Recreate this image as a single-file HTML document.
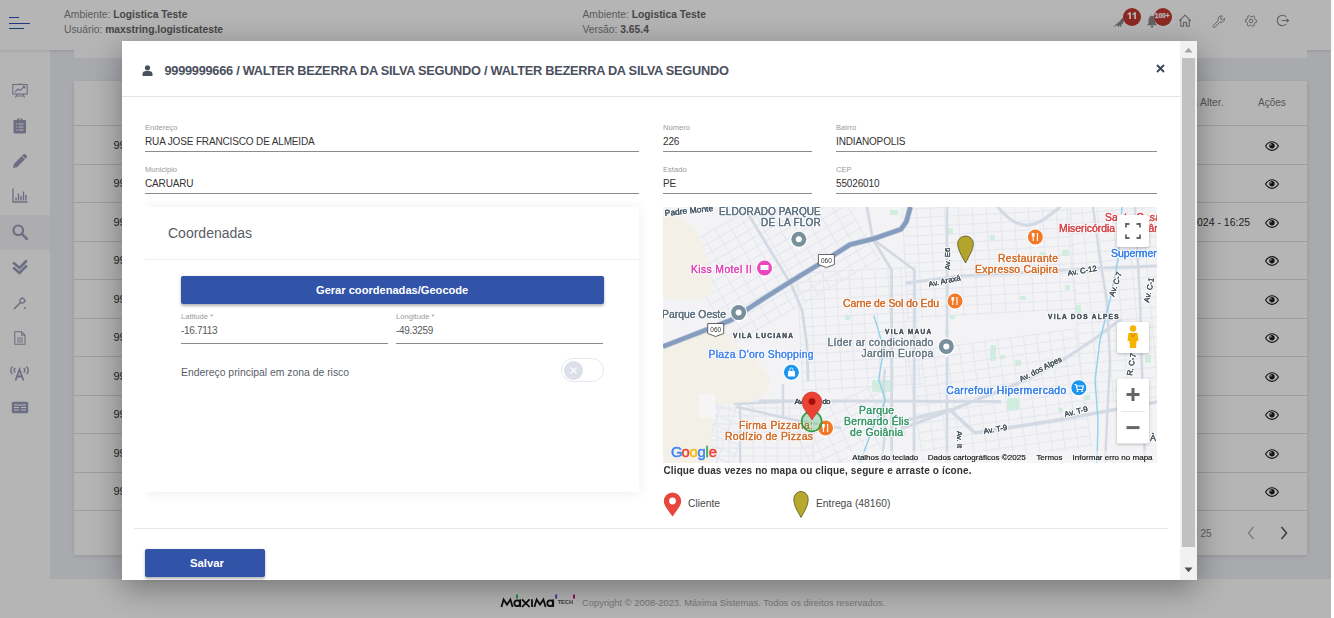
<!DOCTYPE html>
<html><head><meta charset="utf-8"><style>
*{box-sizing:border-box}
html,body{margin:0;padding:0}
body{width:1334px;height:618px;overflow:hidden;position:relative;background:#fff;font-family:"Liberation Sans",sans-serif}
.t{position:absolute;white-space:nowrap}
.r{position:absolute}
svg{position:absolute;overflow:visible}
</style></head>
<body>
<div class="r" style="left:0px;top:0px;width:1334px;height:618px;background:#ffffff;"></div><div class="r" style="left:50px;top:50px;width:1281px;height:529px;background:#eef0f5;"></div><div class="r" style="left:0px;top:50px;width:50px;height:528px;background:#ffffff;"></div><div class="r" style="left:0px;top:215px;width:50px;height:35px;background:#f4f4f7;"></div><div class="r" style="left:0px;top:0px;width:1331px;height:50px;background:#ffffff;box-shadow:0 1px 3px rgba(0,0,0,.12)"></div><div class="r" style="left:9px;top:16.7px;width:10px;height:1.1px;background:#2c4fb0;"></div><div class="r" style="left:9px;top:22.8px;width:21px;height:1.1px;background:#2c4fb0;"></div><div class="r" style="left:9px;top:27.9px;width:15px;height:1.1px;background:#2c4fb0;"></div><div class="t" style="left:64px;top:10.44px;font-size:10.3px;line-height:10.3px;color:#838383;font-weight:400;">Ambiente: <b style="color:#666666">Logistica Teste</b></div><div class="t" style="left:64px;top:25.24px;font-size:10.3px;line-height:10.3px;color:#838383;font-weight:400;">Usuário: <b style="color:#666666">maxstring.logisticateste</b></div><div class="t" style="left:582.5px;top:10.44px;font-size:10.3px;line-height:10.3px;color:#838383;font-weight:400;">Ambiente: <b style="color:#666666">Logistica Teste</b></div><div class="t" style="left:582.5px;top:25.24px;font-size:10.3px;line-height:10.3px;color:#838383;font-weight:400;">Versão: <b style="color:#666666">3.65.4</b></div><svg style="left:1111px;top:13px;" width="16" height="16" viewBox="0 0 16 16"><path d="M2 14 L9 8 C10 6 11 5 12.5 4.5 L14 4 L13 6 C13.5 9 12 11 10 12 L10.5 14 L9.5 14 L9 12.5 L8 12.5 L8 14 L7 14 L7 12.5 C5.5 12.5 4 13.2 2 14 Z" fill="#8a8a8a"/></svg><svg style="left:1145px;top:14px;" width="14" height="14" viewBox="0 0 14 14"><path d="M7 1.5 C4.5 2 3.5 4 3.5 6.5 L3.5 9.5 L1.8 11.3 L12.2 11.3 L10.5 9.5 L10.5 6.5 C10.5 4 9.5 2 7 1.5 Z" fill="#8a8a8a"/><circle cx="7" cy="12.6" r="1.2" fill="#8a8a8a"/></svg><div class="r" style="left:1123px;top:8px;width:18px;height:18px;border-radius:50%;background:#c4392f"></div><svg style="left:1127px;top:12px;" width="10" height="8" viewBox="0 0 10 8"><path d="M0.6 1.6 L2.6 0.3 L3.9 0.3 L3.9 7 L2.2 7 L2.2 2.2 L0.6 3 Z M5.6 1.6 L7.6 0.3 L8.9 0.3 L8.9 7 L7.2 7 L7.2 2.2 L5.6 3 Z" fill="#fff"/></svg><div class="r" style="left:1153.5px;top:8px;width:18px;height:18px;border-radius:50%;background:#c4392f"></div><svg style="left:1154px;top:12px;" width="17" height="8" viewBox="0 0 17 8"><text x="8.2" y="6.2" font-family="Liberation Sans" font-weight="700" font-size="6.6" fill="#fff" stroke="#fff" stroke-width="0.25" text-anchor="middle" textLength="14.8" lengthAdjust="spacingAndGlyphs">100+</text></svg><svg style="left:1178px;top:14px;" width="14" height="13" viewBox="0 0 14 13"><path d="M1.2 6.8 L7 1.2 L12.8 6.8 M2.8 5.4 L2.8 12.2 L5.6 12.2 L5.6 8.3 L8.4 8.3 L8.4 12.2 L11.2 12.2 L11.2 5.4" fill="none" stroke="#8a8a8a" stroke-width="1.1" stroke-linejoin="round"/></svg><svg style="left:1211px;top:14px;" width="14" height="14" viewBox="0 0 14 14"><path d="M2.2 11.8 L7.2 6.6 C6.6 4.9 7.2 3 8.9 2.2 C9.8 1.8 10.6 1.8 11.3 2.1 L9.6 3.8 L10 5.5 L11.7 5.9 L13.4 4.2 C13.7 5 13.6 5.9 13.1 6.7 C12.2 8.1 10.4 8.6 8.9 8.1 L3.8 13.3 C3.2 13.8 2.4 13.6 2 13 C1.8 12.6 1.9 12.1 2.2 11.8 Z" fill="none" stroke="#8a8a8a" stroke-width="1"/></svg><svg style="left:1243.5px;top:13.5px;" width="14" height="14" viewBox="0 0 14 14"><polygon points="12.60,7.00 12.55,7.73 12.41,8.45 10.97,8.65 10.72,9.15 10.41,9.62 10.04,10.04 10.41,11.44 9.80,11.85 9.14,12.17 8.45,12.41 7.56,11.26 7.00,11.30 6.44,11.26 5.89,11.15 4.86,12.17 4.20,11.85 3.59,11.44 3.04,10.96 3.59,9.62 3.28,9.15 3.03,8.65 2.85,8.11 1.45,7.73 1.40,7.00 1.45,6.27 1.59,5.55 3.03,5.35 3.28,4.85 3.59,4.38 3.96,3.96 3.59,2.56 4.20,2.15 4.86,1.83 5.55,1.59 6.44,2.74 7.00,2.70 7.56,2.74 8.11,2.85 9.14,1.83 9.80,2.15 10.41,2.56 10.96,3.04 10.41,4.38 10.72,4.85 10.97,5.35 11.15,5.89 12.55,6.27" fill="none" stroke="#8a8a8a" stroke-width="1" stroke-linejoin="round"/><circle cx="7" cy="7" r="1.8" fill="none" stroke="#8a8a8a" stroke-width="1"/></svg><svg style="left:1276px;top:14px;" width="14" height="13" viewBox="0 0 14 13"><path d="M10.3 3 A5.2 5.2 0 1 0 10.3 10" fill="none" stroke="#8a8a8a" stroke-width="1.1"/><path d="M5.5 6.5 L12.6 6.5 M10.6 4.6 L12.6 6.5 L10.6 8.4" fill="none" stroke="#8a8a8a" stroke-width="1.1"/></svg><svg style="left:12px;top:83px;" width="16" height="16" viewBox="0 0 16 16"><rect x="0.8" y="1.5" width="14.4" height="9.5" fill="none" stroke="#9b9cb7" stroke-width="1.1"/><path d="M3 9 L6 6 L8 7.5 L12.5 3.5 M10.5 3.3 L12.8 3.3 L12.8 5.5" fill="none" stroke="#9b9cb7" stroke-width="1.1"/><path d="M8 0 L8 1.5 M5 11 L3.5 14.5 M11 11 L12.5 14.5 M4 13 L12 13" stroke="#9b9cb7" stroke-width="1.1"/></svg><svg style="left:13px;top:118px;" width="14" height="16" viewBox="0 0 14 16"><rect x="0.5" y="2" width="12.5" height="13.5" rx="1.2" fill="#9b9cb7"/><rect x="4" y="0.5" width="5.5" height="3" rx="1" fill="#9b9cb7"/><circle cx="6.75" cy="1.6" r="0.8" fill="#fff"/><path d="M3 6 L4 6 M3 9 L4 9 M3 12 L4 12 M5.5 6 L10.5 6 M5.5 9 L10.5 9 M5.5 12 L10.5 12" stroke="#fff" stroke-width="1.1"/></svg><svg style="left:12px;top:153px;" width="16" height="16" viewBox="0 0 16 16"><path d="M1 15 L1.8 11 L11.5 1.3 C12 0.8 12.8 0.8 13.3 1.3 L14.7 2.7 C15.2 3.2 15.2 4 14.7 4.5 L5 14.2 Z" fill="#9b9cb7"/><path d="M10 3 L13 6" stroke="#fff" stroke-width="0.9"/></svg><svg style="left:12px;top:188px;" width="16" height="15" viewBox="0 0 16 15"><path d="M1 0.5 L1 14 L15.5 14" fill="none" stroke="#9b9cb7" stroke-width="1.3"/><path d="M4 12.5 L4 9.5 M6.5 12.5 L6.5 5.5 M9 12.5 L9 8 M11.5 12.5 L11.5 3.5 M14 12.5 L14 7" stroke="#9b9cb7" stroke-width="1.4"/></svg><svg style="left:12px;top:224px;" width="16" height="16" viewBox="0 0 16 16"><circle cx="6.3" cy="6.3" r="4.8" fill="none" stroke="#9b9cb7" stroke-width="2.2"/><path d="M9.8 9.8 L14.8 14.8" stroke="#9b9cb7" stroke-width="2.6" stroke-linecap="round"/></svg><svg style="left:12px;top:259px;" width="16" height="16" viewBox="0 0 16 16"><path d="M1.2 3.5 L7.5 9 L14.8 1.5 M1.2 8.5 L7.5 14 L14.8 6.5" fill="none" stroke="#9b9cb7" stroke-width="2.6"/></svg><svg style="left:13px;top:296px;" width="14" height="14" viewBox="0 0 14 14"><path d="M1 13 L8 6" stroke="#9b9cb7" stroke-width="1.6"/><circle cx="9.2" cy="4.8" r="2.4" fill="none" stroke="#9b9cb7" stroke-width="1.2"/><path d="M9.2 0.8 L9.2 1.8 M13.2 4.8 L12.2 4.8 M12 11 L12 13 M11 12 L13 12" stroke="#9b9cb7" stroke-width="1"/></svg><svg style="left:14px;top:331px;" width="12" height="14" viewBox="0 0 12 14"><path d="M0.8 0.8 L7.5 0.8 L11 4.3 L11 13.2 L0.8 13.2 Z" fill="none" stroke="#9b9cb7" stroke-width="1.1"/><path d="M7.5 0.8 L7.5 4.3 L11 4.3 M3 7 L9 7 M3 9 L9 9 M3 11 L9 11" fill="none" stroke="#9b9cb7" stroke-width="0.9"/></svg><svg style="left:9px;top:365px;" width="21" height="16" viewBox="0 0 21 16"><path d="M3.5 1.5 C1.2 3.5 1.2 7 3.5 9 M6.2 3 C5 4.2 5 6.2 6.2 7.4 M17.5 1.5 C19.8 3.5 19.8 7 17.5 9 M14.8 3 C16 4.2 16 6.2 14.8 7.4" fill="none" stroke="#9b9cb7" stroke-width="1.4"/><path d="M6.5 15.5 L10.5 4.5 L14.5 15.5 M8 11.5 L13 11.5" fill="none" stroke="#9b9cb7" stroke-width="1.8"/></svg><svg style="left:11px;top:401px;" width="18" height="13" viewBox="0 0 18 13"><rect x="0.8" y="0.8" width="16.4" height="11.4" rx="1.5" fill="#9b9cb7"/><path d="M3 4 L15 4 M3 6.5 L8 6.5 M10 6.5 L15 6.5 M3 9 L8 9 M10 9 L15 9" stroke="#fff" stroke-width="1"/></svg><div class="r" style="left:74px;top:50px;width:1233px;height:8px;background:#ffffff;"></div><div class="r" style="left:74px;top:81px;width:1233px;height:474px;background:#ffffff;box-shadow:0 1px 4px rgba(0,0,0,.12)"></div><div class="r" style="left:74px;top:125px;width:1233px;height:1px;background:#dedede;"></div><div class="r" style="left:74px;top:163.5px;width:1233px;height:1px;background:#dedede;"></div><div class="r" style="left:74px;top:202px;width:1233px;height:1px;background:#dedede;"></div><div class="r" style="left:74px;top:240.5px;width:1233px;height:1px;background:#dedede;"></div><div class="r" style="left:74px;top:279px;width:1233px;height:1px;background:#dedede;"></div><div class="r" style="left:74px;top:317.5px;width:1233px;height:1px;background:#dedede;"></div><div class="r" style="left:74px;top:356px;width:1233px;height:1px;background:#dedede;"></div><div class="r" style="left:74px;top:394.5px;width:1233px;height:1px;background:#dedede;"></div><div class="r" style="left:74px;top:433px;width:1233px;height:1px;background:#dedede;"></div><div class="r" style="left:74px;top:471.5px;width:1233px;height:1px;background:#dedede;"></div><div class="r" style="left:74px;top:509.5px;width:1233px;height:1px;background:#dedede;"></div><div class="t" style="left:1176px;top:97.55px;font-size:10.3px;line-height:10.3px;color:#7a7a7a;font-weight:400;">Data Alter.</div><div class="t" style="left:1258px;top:97.80px;font-size:10px;line-height:10px;color:#7a7a7a;font-weight:400;">Ações</div><div class="t" style="left:113.5px;top:139.90px;font-size:11px;line-height:11px;color:#333;font-weight:400;">9999999</div><svg style="left:1264.5px;top:140.65px;" width="14" height="10" viewBox="0 0 14 10"><path d="M0.6 5 C2.6 1.6 4.8 0.7 7 0.7 C9.2 0.7 11.4 1.6 13.4 5 C11.4 8.4 9.2 9.3 7 9.3 C4.8 9.3 2.6 8.4 0.6 5 Z" fill="none" stroke="#1e1e1e" stroke-width="1.15"/><circle cx="7" cy="4.7" r="2.7" fill="#1e1e1e"/><circle cx="5.9" cy="3.7" r="0.8" fill="#e6e6e6"/></svg><div class="t" style="left:113.5px;top:178.40px;font-size:11px;line-height:11px;color:#333;font-weight:400;">9999999</div><svg style="left:1264.5px;top:179.15px;" width="14" height="10" viewBox="0 0 14 10"><path d="M0.6 5 C2.6 1.6 4.8 0.7 7 0.7 C9.2 0.7 11.4 1.6 13.4 5 C11.4 8.4 9.2 9.3 7 9.3 C4.8 9.3 2.6 8.4 0.6 5 Z" fill="none" stroke="#1e1e1e" stroke-width="1.15"/><circle cx="7" cy="4.7" r="2.7" fill="#1e1e1e"/><circle cx="5.9" cy="3.7" r="0.8" fill="#e6e6e6"/></svg><div class="t" style="left:113.5px;top:216.90px;font-size:11px;line-height:11px;color:#333;font-weight:400;">9999999</div><svg style="left:1264.5px;top:217.65px;" width="14" height="10" viewBox="0 0 14 10"><path d="M0.6 5 C2.6 1.6 4.8 0.7 7 0.7 C9.2 0.7 11.4 1.6 13.4 5 C11.4 8.4 9.2 9.3 7 9.3 C4.8 9.3 2.6 8.4 0.6 5 Z" fill="none" stroke="#1e1e1e" stroke-width="1.15"/><circle cx="7" cy="4.7" r="2.7" fill="#1e1e1e"/><circle cx="5.9" cy="3.7" r="0.8" fill="#e6e6e6"/></svg><div class="t" style="left:113.5px;top:255.40px;font-size:11px;line-height:11px;color:#333;font-weight:400;">9999999</div><svg style="left:1264.5px;top:256.15px;" width="14" height="10" viewBox="0 0 14 10"><path d="M0.6 5 C2.6 1.6 4.8 0.7 7 0.7 C9.2 0.7 11.4 1.6 13.4 5 C11.4 8.4 9.2 9.3 7 9.3 C4.8 9.3 2.6 8.4 0.6 5 Z" fill="none" stroke="#1e1e1e" stroke-width="1.15"/><circle cx="7" cy="4.7" r="2.7" fill="#1e1e1e"/><circle cx="5.9" cy="3.7" r="0.8" fill="#e6e6e6"/></svg><div class="t" style="left:113.5px;top:293.90px;font-size:11px;line-height:11px;color:#333;font-weight:400;">9999999</div><svg style="left:1264.5px;top:294.65px;" width="14" height="10" viewBox="0 0 14 10"><path d="M0.6 5 C2.6 1.6 4.8 0.7 7 0.7 C9.2 0.7 11.4 1.6 13.4 5 C11.4 8.4 9.2 9.3 7 9.3 C4.8 9.3 2.6 8.4 0.6 5 Z" fill="none" stroke="#1e1e1e" stroke-width="1.15"/><circle cx="7" cy="4.7" r="2.7" fill="#1e1e1e"/><circle cx="5.9" cy="3.7" r="0.8" fill="#e6e6e6"/></svg><div class="t" style="left:113.5px;top:332.40px;font-size:11px;line-height:11px;color:#333;font-weight:400;">9999999</div><svg style="left:1264.5px;top:333.15px;" width="14" height="10" viewBox="0 0 14 10"><path d="M0.6 5 C2.6 1.6 4.8 0.7 7 0.7 C9.2 0.7 11.4 1.6 13.4 5 C11.4 8.4 9.2 9.3 7 9.3 C4.8 9.3 2.6 8.4 0.6 5 Z" fill="none" stroke="#1e1e1e" stroke-width="1.15"/><circle cx="7" cy="4.7" r="2.7" fill="#1e1e1e"/><circle cx="5.9" cy="3.7" r="0.8" fill="#e6e6e6"/></svg><div class="t" style="left:113.5px;top:370.90px;font-size:11px;line-height:11px;color:#333;font-weight:400;">9999999</div><svg style="left:1264.5px;top:371.65px;" width="14" height="10" viewBox="0 0 14 10"><path d="M0.6 5 C2.6 1.6 4.8 0.7 7 0.7 C9.2 0.7 11.4 1.6 13.4 5 C11.4 8.4 9.2 9.3 7 9.3 C4.8 9.3 2.6 8.4 0.6 5 Z" fill="none" stroke="#1e1e1e" stroke-width="1.15"/><circle cx="7" cy="4.7" r="2.7" fill="#1e1e1e"/><circle cx="5.9" cy="3.7" r="0.8" fill="#e6e6e6"/></svg><div class="t" style="left:113.5px;top:409.40px;font-size:11px;line-height:11px;color:#333;font-weight:400;">9999999</div><svg style="left:1264.5px;top:410.15px;" width="14" height="10" viewBox="0 0 14 10"><path d="M0.6 5 C2.6 1.6 4.8 0.7 7 0.7 C9.2 0.7 11.4 1.6 13.4 5 C11.4 8.4 9.2 9.3 7 9.3 C4.8 9.3 2.6 8.4 0.6 5 Z" fill="none" stroke="#1e1e1e" stroke-width="1.15"/><circle cx="7" cy="4.7" r="2.7" fill="#1e1e1e"/><circle cx="5.9" cy="3.7" r="0.8" fill="#e6e6e6"/></svg><div class="t" style="left:113.5px;top:447.90px;font-size:11px;line-height:11px;color:#333;font-weight:400;">9999999</div><svg style="left:1264.5px;top:448.65px;" width="14" height="10" viewBox="0 0 14 10"><path d="M0.6 5 C2.6 1.6 4.8 0.7 7 0.7 C9.2 0.7 11.4 1.6 13.4 5 C11.4 8.4 9.2 9.3 7 9.3 C4.8 9.3 2.6 8.4 0.6 5 Z" fill="none" stroke="#1e1e1e" stroke-width="1.15"/><circle cx="7" cy="4.7" r="2.7" fill="#1e1e1e"/><circle cx="5.9" cy="3.7" r="0.8" fill="#e6e6e6"/></svg><div class="t" style="left:113.5px;top:486.15px;font-size:11px;line-height:11px;color:#333;font-weight:400;">9999999</div><svg style="left:1264.5px;top:486.9px;" width="14" height="10" viewBox="0 0 14 10"><path d="M0.6 5 C2.6 1.6 4.8 0.7 7 0.7 C9.2 0.7 11.4 1.6 13.4 5 C11.4 8.4 9.2 9.3 7 9.3 C4.8 9.3 2.6 8.4 0.6 5 Z" fill="none" stroke="#1e1e1e" stroke-width="1.15"/><circle cx="7" cy="4.7" r="2.7" fill="#1e1e1e"/><circle cx="5.9" cy="3.7" r="0.8" fill="#e6e6e6"/></svg><div class="t" style="left:1197px;top:217.27px;font-size:10.5px;line-height:10.5px;color:#333;font-weight:400;">024 - 16:25</div><div class="t" style="left:1186.5px;top:528.50px;font-size:10px;line-height:10px;color:#8a8a8a;font-weight:400;">de 25</div><svg style="left:1247px;top:526px;" width="8" height="14" viewBox="0 0 8 14"><path d="M6.5 1 L1.5 7 L6.5 13" fill="none" stroke="#b9b9b9" stroke-width="1.6"/></svg><svg style="left:1280px;top:526px;" width="8" height="14" viewBox="0 0 8 14"><path d="M1.5 1 L6.5 7 L1.5 13" fill="none" stroke="#5a5a5a" stroke-width="1.6"/></svg><svg style="left:495px;top:590px;" width="85" height="22" viewBox="0 0 85 22"><g fill="none" stroke="#111" stroke-width="1.75" stroke-linejoin="miter"><path d="M6.4 16.9 L8.6 9.6 L12 14.6 L15.4 9.6 L17.6 16.9"/><circle cx="22.2" cy="13.2" r="2.9"/><path d="M25.2 9.4 L25.2 17"/><path d="M27 9.3 L34.6 17 M34.6 9.3 L27 17"/><path d="M37 9.3 L37 17"/><path d="M39.4 16.9 L41.6 9.6 L45 14.6 L48.4 9.6 L50.6 16.9"/><circle cx="55.2" cy="13.2" r="2.9"/><path d="M58.2 9.4 L58.2 17"/></g><text x="62.7" y="13.8" font-family="Liberation Sans" font-weight="700" font-size="6.2" fill="#555" textLength="15.3" lengthAdjust="spacingAndGlyphs">TECH</text><rect x="21" y="4.5" width="2" height="4.1" fill="#3cc464"/><rect x="60.2" y="4.5" width="1.9" height="4.1" fill="#4a55e0"/><rect x="78" y="4.5" width="2" height="4.1" fill="#d4157f"/></svg><div class="t" style="left:582px;top:598.01px;font-size:9.4px;line-height:9.4px;color:#a8a8a8;font-weight:400;">Copyright © 2008-2023. Máxima Sistemas. Todos os direitos reservados.</div><div class="r" style="left:0px;top:0px;width:1331px;height:618px;background:rgba(0,0,0,.29);"></div><div class="r" style="left:122px;top:41px;width:1075px;height:539px;background:#ffffff;box-shadow:0 8px 30px rgba(0,0,0,.36)"></div><div class="r" style="left:1180px;top:41px;width:17px;height:539px;background:#f1f1f1;"></div><div class="r" style="left:1182px;top:58px;width:13px;height:489px;background:#c1c1c1;"></div><svg style="left:1184px;top:47px;" width="9" height="6" viewBox="0 0 9 6"><path d="M0.5 5.5 L4.5 0.8 L8.5 5.5 Z" fill="#a3a3a3"/></svg><svg style="left:1184px;top:567px;" width="9" height="6" viewBox="0 0 9 6"><path d="M0.5 0.5 L4.5 5.2 L8.5 0.5 Z" fill="#505050"/></svg><div class="r" style="left:122px;top:96px;width:1058px;height:1px;background:#e5e5e5;"></div><svg style="left:142px;top:65px;" width="11" height="11" viewBox="0 0 11 11"><circle cx="5.5" cy="2.8" r="2.6" fill="#4b5060"/><path d="M0.5 11 L0.5 9 C0.5 7 2 6 4 6 L7 6 C9 6 10.5 7 10.5 9 L10.5 11 Z" fill="#4b5060"/></svg><div class="t" style="left:164.5px;top:64.62px;font-size:12.8px;line-height:12.8px;color:#4b5060;font-weight:700;letter-spacing:-0.28px;">9999999666 / WALTER BEZERRA DA SILVA SEGUNDO / WALTER BEZERRA DA SILVA SEGUNDO</div><svg style="left:1156px;top:63.5px;" width="9" height="9" viewBox="0 0 9 9"><path d="M1 1 L8 8 M8 1 L1 8" stroke="#3c4458" stroke-width="1.8"/></svg><div class="t" style="left:145px;top:123.54px;font-size:7.6px;line-height:7.6px;color:#9a9a9a;font-weight:400;">Endereço</div><div class="t" style="left:145px;top:136.50px;font-size:10px;line-height:10px;color:#333;font-weight:400;letter-spacing:-0.15px">RUA JOSE FRANCISCO DE ALMEIDA</div><div class="r" style="left:145px;top:151px;width:494px;height:1px;background:#8c8c8c;"></div><div class="t" style="left:663px;top:123.54px;font-size:7.6px;line-height:7.6px;color:#9a9a9a;font-weight:400;">Número</div><div class="t" style="left:663px;top:136.50px;font-size:10px;line-height:10px;color:#333;font-weight:400;letter-spacing:-0.15px">226</div><div class="r" style="left:663px;top:151px;width:149px;height:1px;background:#8c8c8c;"></div><div class="t" style="left:836px;top:123.54px;font-size:7.6px;line-height:7.6px;color:#9a9a9a;font-weight:400;">Bairro</div><div class="t" style="left:836px;top:136.50px;font-size:10px;line-height:10px;color:#333;font-weight:400;letter-spacing:-0.15px">INDIANOPOLIS</div><div class="r" style="left:836px;top:151px;width:321px;height:1px;background:#8c8c8c;"></div><div class="t" style="left:145px;top:165.54px;font-size:7.6px;line-height:7.6px;color:#9a9a9a;font-weight:400;">Municipio</div><div class="t" style="left:145px;top:178.50px;font-size:10px;line-height:10px;color:#333;font-weight:400;letter-spacing:-0.15px">CARUARU</div><div class="r" style="left:145px;top:193px;width:494px;height:1px;background:#8c8c8c;"></div><div class="t" style="left:663px;top:165.54px;font-size:7.6px;line-height:7.6px;color:#9a9a9a;font-weight:400;">Estado</div><div class="t" style="left:663px;top:178.50px;font-size:10px;line-height:10px;color:#333;font-weight:400;letter-spacing:-0.15px">PE</div><div class="r" style="left:663px;top:193px;width:149px;height:1px;background:#8c8c8c;"></div><div class="t" style="left:836px;top:165.54px;font-size:7.6px;line-height:7.6px;color:#9a9a9a;font-weight:400;">CEP</div><div class="t" style="left:836px;top:178.50px;font-size:10px;line-height:10px;color:#333;font-weight:400;letter-spacing:-0.15px">55026010</div><div class="r" style="left:836px;top:193px;width:321px;height:1px;background:#8c8c8c;"></div><div class="r" style="left:145px;top:194px;width:518px;height:320px;overflow:hidden"><div class="r" style="left:0;top:13px;width:494px;height:285px;background:#fff;box-shadow:0 1px 12px rgba(0,0,0,.075)"></div></div><div class="t" style="left:168px;top:226.10px;font-size:14px;line-height:14px;color:#5a5d66;font-weight:400;">Coordenadas</div><div class="r" style="left:145px;top:259px;width:494px;height:1px;background:#ececf2;"></div><div class="r" style="left:181px;top:276px;width:423px;height:28px;background:#3254a8;border-radius:2px;box-shadow:0 1.5px 3px rgba(0,0,0,.3)"></div><div class="t" style="left:316px;top:284.56px;font-size:11.1px;line-height:11.1px;color:#ffffff;font-weight:700;">Gerar coordenadas/Geocode</div><div class="t" style="left:181px;top:312.54px;font-size:7.6px;line-height:7.6px;color:#9a9a9a;font-weight:400;">Latitude *</div><div class="t" style="left:181px;top:326.00px;font-size:10px;line-height:10px;color:#5a5a5a;font-weight:400;letter-spacing:-0.3px;">-16.7113</div><div class="r" style="left:181px;top:343px;width:207px;height:1px;background:#8c8c8c;"></div><div class="t" style="left:396px;top:312.54px;font-size:7.6px;line-height:7.6px;color:#9a9a9a;font-weight:400;">Longitude *</div><div class="t" style="left:396px;top:326.00px;font-size:10px;line-height:10px;color:#5a5a5a;font-weight:400;letter-spacing:-0.3px;">-49.3259</div><div class="r" style="left:396px;top:343px;width:207px;height:1px;background:#8c8c8c;"></div><div class="t" style="left:181px;top:368.16px;font-size:10.4px;line-height:10.4px;color:#5a5d68;font-weight:400;">Endereço principal em zona de risco</div><div class="r" style="left:561px;top:358px;width:43px;height:24px;background:#fff;border:1px solid #e6e8f0;border-radius:12px"></div><div class="r" style="left:564px;top:361px;width:19px;height:19px;border-radius:50%;background:#dde0ea"></div><svg style="left:570px;top:367px;" width="7" height="7" viewBox="0 0 7 7"><path d="M0.5 0.5 L6.5 6.5 M6.5 0.5 L0.5 6.5" stroke="#fff" stroke-width="1.1"/></svg><svg style="left:663px;top:207px;overflow:hidden" width="494" height="256" viewBox="663 207 494 256"><rect x="663" y="207" width="494" height="256" fill="#f3f2f5"/>
<rect x="890" y="210" width="8" height="5" fill="#cfeedd" rx="1"/>
<rect x="948" y="228" width="5" height="6" fill="#cfeedd" rx="1"/>
<rect x="990" y="235" width="5" height="6" fill="#cfeedd" rx="1"/>
<rect x="1040" y="252" width="6" height="5" fill="#cfeedd" rx="1"/>
<rect x="1062" y="250" width="7" height="6" fill="#cfeedd" rx="1"/>
<rect x="1065" y="285" width="5" height="5" fill="#cfeedd" rx="1"/>
<rect x="1075" y="305" width="6" height="8" fill="#cfeedd" rx="1"/>
<rect x="1020" y="296" width="6" height="4" fill="#cfeedd" rx="1"/>
<rect x="950" y="315" width="5" height="4" fill="#cfeedd" rx="1"/>
<rect x="945" y="330" width="4" height="3" fill="#cfeedd" rx="1"/>
<rect x="990" y="345" width="6" height="16" fill="#cfeedd" rx="1"/>
<rect x="1000" y="355" width="5" height="4" fill="#cfeedd" rx="1"/>
<rect x="1015" y="360" width="6" height="6" fill="#cfeedd" rx="1"/>
<rect x="1050" y="360" width="5" height="6" fill="#cfeedd" rx="1"/>
<rect x="1007" y="398" width="12" height="12" fill="#cfeedd" rx="1"/>
<rect x="1058" y="408" width="5" height="4" fill="#cfeedd" rx="1"/>
<rect x="1085" y="395" width="5" height="5" fill="#cfeedd" rx="1"/>
<rect x="1145" y="355" width="6" height="8" fill="#cfeedd" rx="1"/>
<rect x="872" y="380" width="20" height="12" fill="#cfeedd" rx="1"/>
<rect x="845" y="315" width="5" height="5" fill="#cfeedd" rx="1"/>
<clipPath id="mc"><rect x="663" y="207" width="494" height="256"/></clipPath>
<g clip-path="url(#mc)" opacity="0.75">
<path transform="translate(780,255) rotate(-30)" d="M-85 -55.0 L-85 55.0 M-71 -55.0 L-71 55.0 M-57 -55.0 L-57 55.0 M-43 -55.0 L-43 55.0 M-29 -55.0 L-29 55.0 M-15 -55.0 L-15 55.0 M-1 -55.0 L-1 55.0 M13 -55.0 L13 55.0 M27 -55.0 L27 55.0 M41 -55.0 L41 55.0 M55 -55.0 L55 55.0 M69 -55.0 L69 55.0 M83 -55.0 L83 55.0 M-85.0 -55 L85.0 -55 M-85.0 -46 L85.0 -46 M-85.0 -37 L85.0 -37 M-85.0 -28 L85.0 -28 M-85.0 -19 L85.0 -19 M-85.0 -10 L85.0 -10 M-85.0 -1 L85.0 -1 M-85.0 8 L85.0 8 M-85.0 17 L85.0 17 M-85.0 26 L85.0 26 M-85.0 35 L85.0 35 M-85.0 44 L85.0 44 M-85.0 53 L85.0 53" stroke="#dce3ec" stroke-width="0.9" fill="none"/>
<path transform="translate(860,330) rotate(-3)" d="M-60 -60.0 L-60 60.0 M-47 -60.0 L-47 60.0 M-34 -60.0 L-34 60.0 M-21 -60.0 L-21 60.0 M-8 -60.0 L-8 60.0 M5 -60.0 L5 60.0 M18 -60.0 L18 60.0 M31 -60.0 L31 60.0 M44 -60.0 L44 60.0 M57 -60.0 L57 60.0 M-60.0 -60 L60.0 -60 M-60.0 -51 L60.0 -51 M-60.0 -42 L60.0 -42 M-60.0 -33 L60.0 -33 M-60.0 -24 L60.0 -24 M-60.0 -15 L60.0 -15 M-60.0 -6 L60.0 -6 M-60.0 3 L60.0 3 M-60.0 12 L60.0 12 M-60.0 21 L60.0 21 M-60.0 30 L60.0 30 M-60.0 39 L60.0 39 M-60.0 48 L60.0 48 M-60.0 57 L60.0 57" stroke="#dce3ec" stroke-width="0.9" fill="none"/>
<path transform="translate(700,420) rotate(20)" d="M-45 -40.0 L-45 40.0 M-30 -40.0 L-30 40.0 M-15 -40.0 L-15 40.0 M0 -40.0 L0 40.0 M15 -40.0 L15 40.0 M30 -40.0 L30 40.0 M45 -40.0 L45 40.0 M-45.0 -40 L45.0 -40 M-45.0 -30 L45.0 -30 M-45.0 -20 L45.0 -20 M-45.0 -10 L45.0 -10 M-45.0 0 L45.0 0 M-45.0 10 L45.0 10 M-45.0 20 L45.0 20 M-45.0 30 L45.0 30 M-45.0 40 L45.0 40" stroke="#dce3ec" stroke-width="0.9" fill="none"/>
<path transform="translate(990,260) rotate(-3)" d="M-85 -55.0 L-85 55.0 M-71 -55.0 L-71 55.0 M-57 -55.0 L-57 55.0 M-43 -55.0 L-43 55.0 M-29 -55.0 L-29 55.0 M-15 -55.0 L-15 55.0 M-1 -55.0 L-1 55.0 M13 -55.0 L13 55.0 M27 -55.0 L27 55.0 M41 -55.0 L41 55.0 M55 -55.0 L55 55.0 M69 -55.0 L69 55.0 M83 -55.0 L83 55.0 M-85.0 -55 L85.0 -55 M-85.0 -46 L85.0 -46 M-85.0 -37 L85.0 -37 M-85.0 -28 L85.0 -28 M-85.0 -19 L85.0 -19 M-85.0 -10 L85.0 -10 M-85.0 -1 L85.0 -1 M-85.0 8 L85.0 8 M-85.0 17 L85.0 17 M-85.0 26 L85.0 26 M-85.0 35 L85.0 35 M-85.0 44 L85.0 44 M-85.0 53 L85.0 53" stroke="#dce3ec" stroke-width="0.9" fill="none"/>
<path transform="translate(1000,400) rotate(-8)" d="M-85 -60.0 L-85 60.0 M-72 -60.0 L-72 60.0 M-59 -60.0 L-59 60.0 M-46 -60.0 L-46 60.0 M-33 -60.0 L-33 60.0 M-20 -60.0 L-20 60.0 M-7 -60.0 L-7 60.0 M6 -60.0 L6 60.0 M19 -60.0 L19 60.0 M32 -60.0 L32 60.0 M45 -60.0 L45 60.0 M58 -60.0 L58 60.0 M71 -60.0 L71 60.0 M84 -60.0 L84 60.0 M-85.0 -60 L85.0 -60 M-85.0 -51 L85.0 -51 M-85.0 -42 L85.0 -42 M-85.0 -33 L85.0 -33 M-85.0 -24 L85.0 -24 M-85.0 -15 L85.0 -15 M-85.0 -6 L85.0 -6 M-85.0 3 L85.0 3 M-85.0 12 L85.0 12 M-85.0 21 L85.0 21 M-85.0 30 L85.0 30 M-85.0 39 L85.0 39 M-85.0 48 L85.0 48 M-85.0 57 L85.0 57" stroke="#dce3ec" stroke-width="0.9" fill="none"/>
<path transform="translate(1120,300) rotate(-5)" d="M-45 -100.0 L-45 100.0 M-30 -100.0 L-30 100.0 M-15 -100.0 L-15 100.0 M0 -100.0 L0 100.0 M15 -100.0 L15 100.0 M30 -100.0 L30 100.0 M45 -100.0 L45 100.0 M-45.0 -100 L45.0 -100 M-45.0 -90 L45.0 -90 M-45.0 -80 L45.0 -80 M-45.0 -70 L45.0 -70 M-45.0 -60 L45.0 -60 M-45.0 -50 L45.0 -50 M-45.0 -40 L45.0 -40 M-45.0 -30 L45.0 -30 M-45.0 -20 L45.0 -20 M-45.0 -10 L45.0 -10 M-45.0 0 L45.0 0 M-45.0 10 L45.0 10 M-45.0 20 L45.0 20 M-45.0 30 L45.0 30 M-45.0 40 L45.0 40 M-45.0 50 L45.0 50 M-45.0 60 L45.0 60 M-45.0 70 L45.0 70 M-45.0 80 L45.0 80 M-45.0 90 L45.0 90 M-45.0 100 L45.0 100" stroke="#dce3ec" stroke-width="0.9" fill="none"/>
<path transform="translate(850,430) rotate(-25)" d="M-50 -30.0 L-50 30.0 M-36 -30.0 L-36 30.0 M-22 -30.0 L-22 30.0 M-8 -30.0 L-8 30.0 M6 -30.0 L6 30.0 M20 -30.0 L20 30.0 M34 -30.0 L34 30.0 M48 -30.0 L48 30.0 M-50.0 -30 L50.0 -30 M-50.0 -21 L50.0 -21 M-50.0 -12 L50.0 -12 M-50.0 -3 L50.0 -3 M-50.0 6 L50.0 6 M-50.0 15 L50.0 15 M-50.0 24 L50.0 24" stroke="#dce3ec" stroke-width="0.9" fill="none"/>
<path transform="translate(760,440) rotate(0)" d="M-55 -40.0 L-55 40.0 M-43 -40.0 L-43 40.0 M-31 -40.0 L-31 40.0 M-19 -40.0 L-19 40.0 M-7 -40.0 L-7 40.0 M5 -40.0 L5 40.0 M17 -40.0 L17 40.0 M29 -40.0 L29 40.0 M41 -40.0 L41 40.0 M53 -40.0 L53 40.0 M-55.0 -40 L55.0 -40 M-55.0 -32 L55.0 -32 M-55.0 -24 L55.0 -24 M-55.0 -16 L55.0 -16 M-55.0 -8 L55.0 -8 M-55.0 0 L55.0 0 M-55.0 8 L55.0 8 M-55.0 16 L55.0 16 M-55.0 24 L55.0 24 M-55.0 32 L55.0 32 M-55.0 40 L55.0 40" stroke="#dce3ec" stroke-width="0.9" fill="none"/>
</g>
<path d="M663 215 L680 217 L694 227 L704 247 L710 270 L713 294 L700 299 L663 299 Z" fill="#f3f0e7"/>
<path d="M663 349 L700 335 L722 327 L732 338 L737 345 L752 356 L770 376 L767 392 L749 404 L715 404 L712 420 L710 463 L663 463 Z" fill="#f3f0e7"/>
<path d="M699 394 L715 394 L715 418 L699 418 Z" fill="#f5f5f5"/>
<path d="M744 207 L770 250 L791 284 L802 310 L807 345 L808 380" stroke="#d3dae4" stroke-width="2.8" fill="none" stroke-linecap="round" stroke-linejoin="round"/>
<path d="M867 207 L872.7 239 L891.6 270 L891.6 463" stroke="#d3dae4" stroke-width="2.8" fill="none" stroke-linecap="round" stroke-linejoin="round"/>
<path d="M872.7 239 L914.4 270 L914 463" stroke="#d3dae4" stroke-width="2.8" fill="none" stroke-linecap="round" stroke-linejoin="round"/>
<path d="M907 283 L960 276 L1030 272 L1100 268 L1157 266" stroke="#d3dae4" stroke-width="3.2" fill="none" stroke-linecap="round" stroke-linejoin="round"/>
<path d="M760 401 L830 401 L1000 401.5" stroke="#d3dae4" stroke-width="3" fill="none" stroke-linecap="round" stroke-linejoin="round"/>
<path d="M998 207 C1010 222 1020 226 1029 225 C1040 224 1050 215 1060 207" stroke="#d3dae4" stroke-width="3" fill="none" stroke-linecap="round" stroke-linejoin="round"/>
<path d="M947 207 L947 463" stroke="#d3dae4" stroke-width="2.6" fill="none" stroke-linecap="round" stroke-linejoin="round"/>
<path d="M735 404 L800 401" stroke="#d3dae4" stroke-width="2.6" fill="none" stroke-linecap="round" stroke-linejoin="round"/>
<path d="M902 428.6 L950 410.6 L980 398.6 L1023 381.6 L1060 362 L1093 340 L1120 320" stroke="#d3dae4" stroke-width="3.2" fill="none" stroke-linecap="round" stroke-linejoin="round"/>
<path d="M907 420 L950 410 L975 433 L1052 421 L1157 402" stroke="#d3dae4" stroke-width="3.6" fill="none" stroke-linecap="round" stroke-linejoin="round"/>
<path d="M1093 207 L1100 260 L1107 300 L1110 360 L1105 463" stroke="#d3dae4" stroke-width="2.4" fill="none" stroke-linecap="round" stroke-linejoin="round"/>
<path d="M1135 207 L1140 300 L1145 463" stroke="#d3dae4" stroke-width="2.4" fill="none" stroke-linecap="round" stroke-linejoin="round"/>
<path d="M885 370 C880 400 890 430 880 463" stroke="#d3dae4" stroke-width="2.4" fill="none" stroke-linecap="round" stroke-linejoin="round"/>
<path d="M783 385 L783 418" stroke="#d3dae4" stroke-width="2.4" fill="none" stroke-linecap="round" stroke-linejoin="round"/>
<path d="M737 407 L790 419 L840 428" stroke="#d3dae4" stroke-width="2.6" fill="none" stroke-linecap="round" stroke-linejoin="round"/>
<path d="M740 404 L740 463" stroke="#d3dae4" stroke-width="2" fill="none" stroke-linecap="round" stroke-linejoin="round"/>
<path d="M873.9 315.6 L883.6 348 L878.7 380 L885.6 400 L872 430 L860 463" stroke="#8fd1ee" stroke-width="1.4" fill="none"/>
<path d="M1122 207 L1118 260 L1110 300 L1100 340 L1095 380 L1098 420 L1097 463" stroke="#8fd1ee" stroke-width="1.4" fill="none"/>
<path d="M663 346.6 L708.3 329 L731 320 L763 299 L790 282 L820.3 263.5 L850 244.6 L874 238.6 L901 229.2 L906.3 221.8 L910.4 207" stroke="#a3b4cc" stroke-width="5.4" fill="none" stroke-linejoin="round"/>
<path d="M663 346.6 L708.3 329 L731 320 L763 299 L790 282 L820.3 263.5 L850 244.6 L874 238.6 L901 229.2 L906.3 221.8 L910.4 207" stroke="#849cbd" stroke-width="3.8" fill="none" stroke-linejoin="round"/>
<path d="M818.4 254.5 L834.4 254.5 L834.4 264.5 L826.4 267.5 L818.4 264.5 Z" fill="#fff" stroke="#555" stroke-width="0.9"/>
<text x="826.4" y="262.8" font-family="Liberation Sans" font-size="6.5" text-anchor="middle" fill="#333">060</text>
<path d="M707.7 323.5 L723.7 323.5 L723.7 333.5 L715.7 336.5 L707.7 333.5 Z" fill="#fff" stroke="#555" stroke-width="0.9"/>
<text x="715.7" y="331.8" font-family="Liberation Sans" font-size="6.5" text-anchor="middle" fill="#333">060</text>
<text x="665" y="216" font-family="Liberation Sans" font-size="8.5" font-weight="400" fill="#46596a" text-anchor="start" letter-spacing="0" stroke="#fff" stroke-width="2.2" paint-order="stroke" stroke-linejoin="round" transform="rotate(-6 665 216)">Padre Monte</text>
<text x="665" y="216" font-family="Liberation Sans" font-size="8.5" font-weight="400" fill="#46596a" text-anchor="start" letter-spacing="0" stroke="#46596a" stroke-width="0.3" transform="rotate(-6 665 216)">Padre Monte</text>
<text x="821" y="215.3" font-family="Liberation Sans" font-size="10" font-weight="400" fill="#5e7282" text-anchor="end" letter-spacing="0.25" stroke="#fff" stroke-width="2.2" paint-order="stroke" stroke-linejoin="round" textLength="102">ELDORADO PARQUE</text>
<text x="821" y="215.3" font-family="Liberation Sans" font-size="10" font-weight="400" fill="#5e7282" text-anchor="end" letter-spacing="0.25" stroke="#5e7282" stroke-width="0.3" textLength="102">ELDORADO PARQUE</text>
<text x="821" y="226" font-family="Liberation Sans" font-size="10" font-weight="400" fill="#5e7282" text-anchor="end" letter-spacing="0.25" stroke="#fff" stroke-width="2.2" paint-order="stroke" stroke-linejoin="round" textLength="60">DE LA FLOR</text>
<text x="821" y="226" font-family="Liberation Sans" font-size="10" font-weight="400" fill="#5e7282" text-anchor="end" letter-spacing="0.25" stroke="#5e7282" stroke-width="0.3" textLength="60">DE LA FLOR</text>
<text x="691" y="273" font-family="Liberation Sans" font-size="10.4" font-weight="400" fill="#e249b8" text-anchor="start" letter-spacing="0" stroke="#fff" stroke-width="2.2" paint-order="stroke" stroke-linejoin="round" textLength="61">Kiss Motel II</text>
<text x="691" y="273" font-family="Liberation Sans" font-size="10.4" font-weight="400" fill="#e249b8" text-anchor="start" letter-spacing="0" stroke="#e249b8" stroke-width="0.3" textLength="61">Kiss Motel II</text>
<text x="843" y="306.7" font-family="Liberation Sans" font-size="10.4" font-weight="400" fill="#d4702f" text-anchor="start" letter-spacing="0" stroke="#fff" stroke-width="2.2" paint-order="stroke" stroke-linejoin="round" textLength="96">Carne de Sol do Edu</text>
<text x="843" y="306.7" font-family="Liberation Sans" font-size="10.4" font-weight="400" fill="#d4702f" text-anchor="start" letter-spacing="0" stroke="#d4702f" stroke-width="0.3" textLength="96">Carne de Sol do Edu</text>
<text x="662" y="317.7" font-family="Liberation Sans" font-size="10.4" font-weight="400" fill="#5e7282" text-anchor="start" letter-spacing="0" stroke="#fff" stroke-width="2.2" paint-order="stroke" stroke-linejoin="round" textLength="64">Parque Oeste</text>
<text x="662" y="317.7" font-family="Liberation Sans" font-size="10.4" font-weight="400" fill="#5e7282" text-anchor="start" letter-spacing="0" stroke="#5e7282" stroke-width="0.3" textLength="64">Parque Oeste</text>
<text x="733" y="338.1" font-family="Liberation Sans" font-size="6.5" font-weight="700" fill="#4d5860" text-anchor="start" letter-spacing="1.3" stroke="#fff" stroke-width="2.2" paint-order="stroke" stroke-linejoin="round">VILA LUCIANA</text>
<text x="733" y="338.1" font-family="Liberation Sans" font-size="6.5" font-weight="700" fill="#4d5860" text-anchor="start" letter-spacing="1.3" stroke="#4d5860" stroke-width="0.3">VILA LUCIANA</text>
<text x="885" y="333.7" font-family="Liberation Sans" font-size="6.5" font-weight="700" fill="#4d5860" text-anchor="start" letter-spacing="1.3" stroke="#fff" stroke-width="2.2" paint-order="stroke" stroke-linejoin="round">VILA MAUA</text>
<text x="885" y="333.7" font-family="Liberation Sans" font-size="6.5" font-weight="700" fill="#4d5860" text-anchor="start" letter-spacing="1.3" stroke="#4d5860" stroke-width="0.3">VILA MAUA</text>
<text x="933.4" y="346" font-family="Liberation Sans" font-size="10.4" font-weight="400" fill="#6b7c88" text-anchor="end" letter-spacing="0" stroke="#fff" stroke-width="2.2" paint-order="stroke" stroke-linejoin="round" textLength="106">Líder ar condicionado</text>
<text x="933.4" y="346" font-family="Liberation Sans" font-size="10.4" font-weight="400" fill="#6b7c88" text-anchor="end" letter-spacing="0" stroke="#6b7c88" stroke-width="0.3" textLength="106">Líder ar condicionado</text>
<text x="933.4" y="357.3" font-family="Liberation Sans" font-size="10.4" font-weight="400" fill="#6b7c88" text-anchor="end" letter-spacing="0" stroke="#fff" stroke-width="2.2" paint-order="stroke" stroke-linejoin="round" textLength="72">Jardim Europa</text>
<text x="933.4" y="357.3" font-family="Liberation Sans" font-size="10.4" font-weight="400" fill="#6b7c88" text-anchor="end" letter-spacing="0" stroke="#6b7c88" stroke-width="0.3" textLength="72">Jardim Europa</text>
<text x="708.5" y="358" font-family="Liberation Sans" font-size="10.4" font-weight="400" fill="#4a88ee" text-anchor="start" letter-spacing="0" stroke="#fff" stroke-width="2.2" paint-order="stroke" stroke-linejoin="round" textLength="105">Plaza D'oro Shopping</text>
<text x="708.5" y="358" font-family="Liberation Sans" font-size="10.4" font-weight="400" fill="#4a88ee" text-anchor="start" letter-spacing="0" stroke="#4a88ee" stroke-width="0.3" textLength="105">Plaza D'oro Shopping</text>
<text x="813" y="429" font-family="Liberation Sans" font-size="10.4" font-weight="400" fill="#d4702f" text-anchor="end" letter-spacing="0" stroke="#fff" stroke-width="2.2" paint-order="stroke" stroke-linejoin="round" textLength="74">Firma Pizzaria:</text>
<text x="813" y="429" font-family="Liberation Sans" font-size="10.4" font-weight="400" fill="#d4702f" text-anchor="end" letter-spacing="0" stroke="#d4702f" stroke-width="0.3" textLength="74">Firma Pizzaria:</text>
<text x="813" y="440" font-family="Liberation Sans" font-size="10.4" font-weight="400" fill="#d4702f" text-anchor="end" letter-spacing="0" stroke="#fff" stroke-width="2.2" paint-order="stroke" stroke-linejoin="round" textLength="88">Rodízio de Pizzas</text>
<text x="813" y="440" font-family="Liberation Sans" font-size="10.4" font-weight="400" fill="#d4702f" text-anchor="end" letter-spacing="0" stroke="#d4702f" stroke-width="0.3" textLength="88">Rodízio de Pizzas</text>
<text x="794.5" y="404" font-family="Liberation Sans" font-size="8" font-weight="400" fill="#3f4a52" text-anchor="start" letter-spacing="0" stroke="#fff" stroke-width="2.2" paint-order="stroke" stroke-linejoin="round" textLength="36">Av. Ana... do</text>
<text x="794.5" y="404" font-family="Liberation Sans" font-size="8" font-weight="400" fill="#3f4a52" text-anchor="start" letter-spacing="0" stroke="#3f4a52" stroke-width="0.3" textLength="36">Av. Ana... do</text>
<text x="876.6" y="413.9" font-family="Liberation Sans" font-size="10.4" font-weight="400" fill="#3d9a6c" text-anchor="middle" letter-spacing="0" stroke="#fff" stroke-width="2.2" paint-order="stroke" stroke-linejoin="round" textLength="35">Parque</text>
<text x="876.6" y="413.9" font-family="Liberation Sans" font-size="10.4" font-weight="400" fill="#3d9a6c" text-anchor="middle" letter-spacing="0" stroke="#3d9a6c" stroke-width="0.3" textLength="35">Parque</text>
<text x="876.6" y="425.3" font-family="Liberation Sans" font-size="10.4" font-weight="400" fill="#3d9a6c" text-anchor="middle" letter-spacing="0" stroke="#fff" stroke-width="2.2" paint-order="stroke" stroke-linejoin="round" textLength="65">Bernardo Élis</text>
<text x="876.6" y="425.3" font-family="Liberation Sans" font-size="10.4" font-weight="400" fill="#3d9a6c" text-anchor="middle" letter-spacing="0" stroke="#3d9a6c" stroke-width="0.3" textLength="65">Bernardo Élis</text>
<text x="876.6" y="436.2" font-family="Liberation Sans" font-size="10.4" font-weight="400" fill="#3d9a6c" text-anchor="middle" letter-spacing="0" stroke="#fff" stroke-width="2.2" paint-order="stroke" stroke-linejoin="round" textLength="53">de Goiânia</text>
<text x="876.6" y="436.2" font-family="Liberation Sans" font-size="10.4" font-weight="400" fill="#3d9a6c" text-anchor="middle" letter-spacing="0" stroke="#3d9a6c" stroke-width="0.3" textLength="53">de Goiânia</text>
<text x="1058" y="261.5" font-family="Liberation Sans" font-size="10.4" font-weight="400" fill="#d4702f" text-anchor="end" letter-spacing="0" stroke="#fff" stroke-width="2.2" paint-order="stroke" stroke-linejoin="round" textLength="60">Restaurante</text>
<text x="1058" y="261.5" font-family="Liberation Sans" font-size="10.4" font-weight="400" fill="#d4702f" text-anchor="end" letter-spacing="0" stroke="#d4702f" stroke-width="0.3" textLength="60">Restaurante</text>
<text x="1058" y="273" font-family="Liberation Sans" font-size="10.4" font-weight="400" fill="#d4702f" text-anchor="end" letter-spacing="0" stroke="#fff" stroke-width="2.2" paint-order="stroke" stroke-linejoin="round" textLength="83">Expresso Caipira</text>
<text x="1058" y="273" font-family="Liberation Sans" font-size="10.4" font-weight="400" fill="#d4702f" text-anchor="end" letter-spacing="0" stroke="#d4702f" stroke-width="0.3" textLength="83">Expresso Caipira</text>
<text x="1105" y="221" font-family="Liberation Sans" font-size="10.4" font-weight="400" fill="#d8494d" text-anchor="start" letter-spacing="0" stroke="#fff" stroke-width="2.2" paint-order="stroke" stroke-linejoin="round" textLength="56">Santa Casa</text>
<text x="1105" y="221" font-family="Liberation Sans" font-size="10.4" font-weight="400" fill="#d8494d" text-anchor="start" letter-spacing="0" stroke="#d8494d" stroke-width="0.3" textLength="56">Santa Casa</text>
<text x="1059" y="231.5" font-family="Liberation Sans" font-size="10.4" font-weight="400" fill="#d8494d" text-anchor="start" letter-spacing="0" stroke="#fff" stroke-width="2.2" paint-order="stroke" stroke-linejoin="round">Misericórdia de Goiânia</text>
<text x="1059" y="231.5" font-family="Liberation Sans" font-size="10.4" font-weight="400" fill="#d8494d" text-anchor="start" letter-spacing="0" stroke="#d8494d" stroke-width="0.3">Misericórdia de Goiânia</text>
<text x="1111" y="257" font-family="Liberation Sans" font-size="10.4" font-weight="400" fill="#3b82e8" text-anchor="start" letter-spacing="0" stroke="#fff" stroke-width="2.2" paint-order="stroke" stroke-linejoin="round">Supermercado</text>
<text x="1111" y="257" font-family="Liberation Sans" font-size="10.4" font-weight="400" fill="#3b82e8" text-anchor="start" letter-spacing="0" stroke="#3b82e8" stroke-width="0.3">Supermercado</text>
<text x="1048" y="318.5" font-family="Liberation Sans" font-size="6.5" font-weight="700" fill="#4d5860" text-anchor="start" letter-spacing="1.3" stroke="#fff" stroke-width="2.2" paint-order="stroke" stroke-linejoin="round">VILA DOS ALPES</text>
<text x="1048" y="318.5" font-family="Liberation Sans" font-size="6.5" font-weight="700" fill="#4d5860" text-anchor="start" letter-spacing="1.3" stroke="#4d5860" stroke-width="0.3">VILA DOS ALPES</text>
<text x="946.3" y="393.5" font-family="Liberation Sans" font-size="10.4" font-weight="400" fill="#3b82e8" text-anchor="start" letter-spacing="0" stroke="#fff" stroke-width="2.2" paint-order="stroke" stroke-linejoin="round" textLength="120">Carrefour Hipermercado</text>
<text x="946.3" y="393.5" font-family="Liberation Sans" font-size="10.4" font-weight="400" fill="#3b82e8" text-anchor="start" letter-spacing="0" stroke="#3b82e8" stroke-width="0.3" textLength="120">Carrefour Hipermercado</text>
<text x="1068" y="276" font-family="Liberation Sans" font-size="7.8" font-weight="400" fill="#4a555e" text-anchor="start" letter-spacing="0" stroke="#fff" stroke-width="2.2" paint-order="stroke" stroke-linejoin="round" transform="rotate(-10 1068 276)">Av. C-12</text>
<text x="1068" y="276" font-family="Liberation Sans" font-size="7.8" font-weight="400" fill="#4a555e" text-anchor="start" letter-spacing="0" stroke="#4a555e" stroke-width="0.3" transform="rotate(-10 1068 276)">Av. C-12</text>
<text x="929" y="287" font-family="Liberation Sans" font-size="7.8" font-weight="400" fill="#4a555e" text-anchor="start" letter-spacing="0" stroke="#fff" stroke-width="2.2" paint-order="stroke" stroke-linejoin="round" transform="rotate(-12 929 287)">Av. Araxá</text>
<text x="929" y="287" font-family="Liberation Sans" font-size="7.8" font-weight="400" fill="#4a555e" text-anchor="start" letter-spacing="0" stroke="#4a555e" stroke-width="0.3" transform="rotate(-12 929 287)">Av. Araxá</text>
<text x="950" y="270" font-family="Liberation Sans" font-size="7.8" font-weight="400" fill="#4a555e" text-anchor="start" letter-spacing="0" stroke="#fff" stroke-width="2.2" paint-order="stroke" stroke-linejoin="round" transform="rotate(-90 950 270)">Av. E6</text>
<text x="950" y="270" font-family="Liberation Sans" font-size="7.8" font-weight="400" fill="#4a555e" text-anchor="start" letter-spacing="0" stroke="#4a555e" stroke-width="0.3" transform="rotate(-90 950 270)">Av. E6</text>
<text x="1114" y="297" font-family="Liberation Sans" font-size="7.8" font-weight="400" fill="#4a555e" text-anchor="start" letter-spacing="0" stroke="#fff" stroke-width="2.2" paint-order="stroke" stroke-linejoin="round" transform="rotate(-72 1114 297)">Av. C-7</text>
<text x="1114" y="297" font-family="Liberation Sans" font-size="7.8" font-weight="400" fill="#4a555e" text-anchor="start" letter-spacing="0" stroke="#4a555e" stroke-width="0.3" transform="rotate(-72 1114 297)">Av. C-7</text>
<text x="1149" y="303" font-family="Liberation Sans" font-size="7.8" font-weight="400" fill="#4a555e" text-anchor="start" letter-spacing="0" stroke="#fff" stroke-width="2.2" paint-order="stroke" stroke-linejoin="round" transform="rotate(-78 1149 303)">Av. C-1</text>
<text x="1149" y="303" font-family="Liberation Sans" font-size="7.8" font-weight="400" fill="#4a555e" text-anchor="start" letter-spacing="0" stroke="#4a555e" stroke-width="0.3" transform="rotate(-78 1149 303)">Av. C-1</text>
<text x="1021" y="382" font-family="Liberation Sans" font-size="7.8" font-weight="400" fill="#4a555e" text-anchor="start" letter-spacing="0" stroke="#fff" stroke-width="2.2" paint-order="stroke" stroke-linejoin="round" transform="rotate(-27 1021 382)">Av. dos Alpes</text>
<text x="1021" y="382" font-family="Liberation Sans" font-size="7.8" font-weight="400" fill="#4a555e" text-anchor="start" letter-spacing="0" stroke="#4a555e" stroke-width="0.3" transform="rotate(-27 1021 382)">Av. dos Alpes</text>
<text x="984" y="434" font-family="Liberation Sans" font-size="7.8" font-weight="400" fill="#4a555e" text-anchor="start" letter-spacing="0" stroke="#fff" stroke-width="2.2" paint-order="stroke" stroke-linejoin="round" transform="rotate(-10 984 434)">Av. T-9</text>
<text x="984" y="434" font-family="Liberation Sans" font-size="7.8" font-weight="400" fill="#4a555e" text-anchor="start" letter-spacing="0" stroke="#4a555e" stroke-width="0.3" transform="rotate(-10 984 434)">Av. T-9</text>
<text x="1065" y="417" font-family="Liberation Sans" font-size="7.8" font-weight="400" fill="#4a555e" text-anchor="start" letter-spacing="0" stroke="#fff" stroke-width="2.2" paint-order="stroke" stroke-linejoin="round" transform="rotate(-14 1065 417)">Av. T-9</text>
<text x="1065" y="417" font-family="Liberation Sans" font-size="7.8" font-weight="400" fill="#4a555e" text-anchor="start" letter-spacing="0" stroke="#4a555e" stroke-width="0.3" transform="rotate(-14 1065 417)">Av. T-9</text>
<text x="1132" y="376" font-family="Liberation Sans" font-size="7.8" font-weight="400" fill="#4a555e" text-anchor="start" letter-spacing="0" stroke="#fff" stroke-width="2.2" paint-order="stroke" stroke-linejoin="round" transform="rotate(-80 1132 376)">R. C-7</text>
<text x="1132" y="376" font-family="Liberation Sans" font-size="7.8" font-weight="400" fill="#4a555e" text-anchor="start" letter-spacing="0" stroke="#4a555e" stroke-width="0.3" transform="rotate(-80 1132 376)">R. C-7</text>
<text x="957" y="431" font-family="Liberation Sans" font-size="7.8" font-weight="400" fill="#4a555e" text-anchor="start" letter-spacing="0" stroke="#fff" stroke-width="2.2" paint-order="stroke" stroke-linejoin="round" transform="rotate(90 957 431)">Av. It</text>
<text x="957" y="431" font-family="Liberation Sans" font-size="7.8" font-weight="400" fill="#4a555e" text-anchor="start" letter-spacing="0" stroke="#4a555e" stroke-width="0.3" transform="rotate(90 957 431)">Av. It</text>
<text x="1150" y="441" font-family="Liberation Sans" font-size="9" font-weight="400" fill="#4a555e" text-anchor="start" letter-spacing="0" stroke="#fff" stroke-width="2.2" paint-order="stroke" stroke-linejoin="round">À</text>
<text x="1150" y="441" font-family="Liberation Sans" font-size="9" font-weight="400" fill="#4a555e" text-anchor="start" letter-spacing="0" stroke="#4a555e" stroke-width="0.3">À</text>
<path d="M795.8 246.3 L798.8 250.3 L801.8 246.3 Z" fill="#fff"/>
<circle cx="798.8" cy="239.3" r="8.6" fill="#fff" opacity="0.9"/>
<circle cx="798.8" cy="239.3" r="7.5" fill="#78909c"/>
<circle cx="798.8" cy="239.3" r="3" fill="#fff"/>
<path d="M735.6 319.6 L738.6 323.6 L741.6 319.6 Z" fill="#fff"/>
<circle cx="738.6" cy="312.6" r="8.6" fill="#fff" opacity="0.9"/>
<circle cx="738.6" cy="312.6" r="7.5" fill="#78909c"/>
<circle cx="738.6" cy="312.6" r="3" fill="#fff"/>
<path d="M943.3 353.4 L946.3 357.4 L949.3 353.4 Z" fill="#fff"/>
<circle cx="946.3" cy="346.4" r="8.6" fill="#fff" opacity="0.9"/>
<circle cx="946.3" cy="346.4" r="7.5" fill="#78909c"/>
<circle cx="946.3" cy="346.4" r="3" fill="#fff"/>
<path d="M761.5 275 L764.5 279 L767.5 275 Z" fill="#fff"/>
<circle cx="764.5" cy="268" r="8.6" fill="#fff" opacity="0.9"/>
<circle cx="764.5" cy="268" r="7.5" fill="#e949c0"/>
<rect x="760.5" y="265" width="8" height="5" fill="#fff" rx="0.5"/>
<path d="M1032.4 244 L1035.4 248 L1038.4 244 Z" fill="#fff"/>
<circle cx="1035.4" cy="237" r="8.6" fill="#fff" opacity="0.9"/>
<circle cx="1035.4" cy="237" r="7.5" fill="#f07a28"/>
<path d="M1033.2 233 L1033.2 241 M1037.4 233 L1037.4 241 M1032.4 233 L1032.4 236 L1034.0 236 L1034.0 233" stroke="#fff" stroke-width="1.1" fill="none"/>
<path d="M952 308 L955 312 L958 308 Z" fill="#fff"/>
<circle cx="955" cy="301" r="8.6" fill="#fff" opacity="0.9"/>
<circle cx="955" cy="301" r="7.5" fill="#f07a28"/>
<path d="M952.8 297 L952.8 305 M957 297 L957 305 M952 297 L952 300 L953.6 300 L953.6 297" stroke="#fff" stroke-width="1.1" fill="none"/>
<path d="M822.6 435 L825.6 439 L828.6 435 Z" fill="#fff"/>
<circle cx="825.6" cy="428" r="8.6" fill="#fff" opacity="0.9"/>
<circle cx="825.6" cy="428" r="7.5" fill="#f07a28"/>
<path d="M823.4 424 L823.4 432 M827.6 424 L827.6 432 M822.6 424 L822.6 427 L824.2 427 L824.2 424" stroke="#fff" stroke-width="1.1" fill="none"/>
<path d="M788.4 379.3 L791.4 383.3 L794.4 379.3 Z" fill="#fff"/>
<circle cx="791.4" cy="372.3" r="8.6" fill="#fff" opacity="0.9"/>
<circle cx="791.4" cy="372.3" r="7.5" fill="#1a95f0"/>
<rect x="788" y="371" width="7" height="5.5" fill="#fff" rx="0.6"/><path d="M789.8 371 L789.8 369.5 A1.6 1.6 0 0 1 793 369.5 L793 371" stroke="#fff" stroke-width="0.9" fill="none"/>
<path d="M1075.8 394.8 L1078.8 398.8 L1081.8 394.8 Z" fill="#fff"/>
<circle cx="1078.8" cy="387.8" r="8.6" fill="#fff" opacity="0.9"/>
<circle cx="1078.8" cy="387.8" r="7.5" fill="#1a95f0"/>
<path d="M1074.5 384.5 L1076 384.5 L1077.2 389.5 L1082.5 389.5 L1083.5 386 L1076.5 386" stroke="#fff" stroke-width="1.1" fill="none"/><circle cx="1077.5" cy="391.2" r="0.9" fill="#fff"/><circle cx="1082" cy="391.2" r="0.9" fill="#fff"/>
<circle cx="811.7" cy="421.4" r="10" fill="rgba(52,168,83,0.28)" stroke="#2f9e44" stroke-width="1.6"/>
<path d="M812 420 C809 414 802.2 409.5 802.2 401.8 A9.8 9.8 0 0 1 821.8 401.8 C821.8 409.5 815 414 812 420 Z" fill="#ea4335" stroke="#c5221f" stroke-width="0.6"/>
<circle cx="812" cy="401.6" r="3.4" fill="#a50e0e"/>
<path d="M965.5 263 C962 256 957.7 250 957.7 243.5 A7.8 7.5 0 0 1 973.3 243.5 C973.3 250 969 256 965.5 263 Z" fill="#b3a42c" stroke="#5a521a" stroke-width="0.8"/>
<rect x="1117" y="215" width="32" height="32" rx="2" fill="#fff" style="filter:drop-shadow(0 1px 1.5px rgba(0,0,0,.25))"/>
<path d="M1126 227.5 L1126 224 L1129.5 224 M1136.5 224 L1140 224 L1140 227.5 M1140 234.5 L1140 238 L1136.5 238 M1129.5 238 L1126 238 L1126 234.5" stroke="#666" stroke-width="1.8" fill="none"/>
<rect x="1117" y="322" width="32" height="31" rx="2" fill="#fff" style="filter:drop-shadow(0 1px 1.5px rgba(0,0,0,.25))"/>
<circle cx="1133" cy="328.5" r="3.2" fill="#f5b400"/><path d="M1128.5 333 L1137.5 333 L1138.5 341 L1136.5 341 L1136 348 L1130 348 L1129.5 341 L1127.5 341 Z" fill="#f5b400"/><path d="M1131 333 L1133 337 L1135 333" stroke="#e37400" stroke-width="0.8" fill="none"/>
<rect x="1117" y="378.5" width="32" height="65" rx="2" fill="#fff" style="filter:drop-shadow(0 1px 1.5px rgba(0,0,0,.25))"/>
<path d="M1126.5 394.5 L1139.5 394.5 M1133 388 L1133 401" stroke="#666" stroke-width="3"/>
<rect x="1121" y="411" width="24" height="1" fill="#e6e6e6"/>
<path d="M1126.5 427.6 L1139.5 427.6" stroke="#666" stroke-width="3"/>
<g font-family="Liberation Sans" font-size="14.8" font-weight="400" stroke-width="0.5" style="paint-order:normal"><text x="671" y="456.5" fill="#4285f4" stroke="#4285f4">G</text><text x="681.5" y="456.5" fill="#ea4335" stroke="#ea4335">o</text><text x="689.5" y="456.5" fill="#fbbc05" stroke="#fbbc05">o</text><text x="697.5" y="456.5" fill="#4285f4" stroke="#4285f4">g</text><text x="705.5" y="456.5" fill="#34a853" stroke="#34a853">l</text><text x="708.7" y="456.5" fill="#ea4335" stroke="#ea4335">e</text></g>
<rect x="848" y="451" width="309" height="12" fill="rgba(245,245,245,0.55)"/>
<text x="852.3" y="460" font-family="Liberation Sans" font-size="7.6" fill="#111" stroke="#111" stroke-width="0.15" textLength="66" lengthAdjust="spacingAndGlyphs">Atalhos do teclado</text>
<text x="927.7" y="460" font-family="Liberation Sans" font-size="7.6" fill="#111" stroke="#111" stroke-width="0.15" textLength="98" lengthAdjust="spacingAndGlyphs">Dados cartográficos ©2025</text>
<text x="1036.4" y="460" font-family="Liberation Sans" font-size="7.6" fill="#111" stroke="#111" stroke-width="0.15" textLength="26" lengthAdjust="spacingAndGlyphs">Termos</text>
<text x="1072.6" y="460" font-family="Liberation Sans" font-size="7.6" fill="#111" stroke="#111" stroke-width="0.15" textLength="80" lengthAdjust="spacingAndGlyphs">Informar erro no mapa</text></svg><div class="t" style="left:663.5px;top:465.70px;font-size:10px;line-height:10px;color:#333;font-weight:700;letter-spacing:0.12px">Clique duas vezes no mapa ou clique, segure e arraste o ícone.</div><svg style="left:663px;top:492px;" width="19" height="25" viewBox="0 0 19 25"><path d="M9.5 24.5 C6 19 0.8 14 0.8 9.2 A8.7 8.7 0 0 1 18.2 9.2 C18.2 14 13 19 9.5 24.5 Z" fill="#e8453c"/><circle cx="9.5" cy="9" r="3.4" fill="#fff"/></svg><div class="t" style="left:688px;top:498.75px;font-size:10.3px;line-height:10.3px;color:#4a4a4a;font-weight:400;">Cliente</div><svg style="left:793px;top:491px;" width="16" height="27" viewBox="0 0 16 27"><path d="M8 26.5 C5 21 0.8 15 0.8 8 A7.2 7.5 0 0 1 15.2 8 C15.2 15 11 21 8 26.5 Z" fill="#b7a82e" stroke="#5d5520" stroke-width="0.8"/></svg><div class="t" style="left:816px;top:498.75px;font-size:10.3px;line-height:10.3px;color:#4a4a4a;font-weight:400;">Entrega (48160)</div><div class="r" style="left:134px;top:528px;width:1034px;height:1px;background:#e8e8e8;"></div><div class="r" style="left:145px;top:549px;width:120px;height:28px;background:#3254a8;border-radius:2px;box-shadow:0 1.5px 3px rgba(0,0,0,.3)"></div><div class="t" style="left:190px;top:557.60px;font-size:11.3px;line-height:11.3px;color:#ffffff;font-weight:700;">Salvar</div>
</body></html>
